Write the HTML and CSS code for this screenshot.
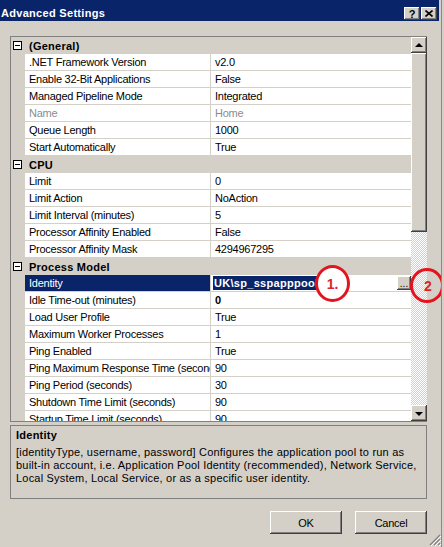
FILE: index.html
```html
<!DOCTYPE html>
<html lang="en">
<head>
    <meta charset="UTF-8">
    <meta name="viewport" content="width=device-width, initial-scale=1.0">
    <title>Advanced Settings</title>
    <link rel="stylesheet" href="styles.css">
</head>
<body>
    <div class="window">
        <div class="titlebar">
            <span class="title">Advanced Settings</span>
            <div class="caption-buttons">
                <button class="caption-btn" type="button">?</button>
                <button class="caption-btn" type="button">
                    <svg width="8" height="7" viewBox="0 0 8 7"><path d="M0.5 0.5 L7.5 6.5 M7.5 0.5 L0.5 6.5" stroke="#000" stroke-width="1.6" fill="none"/></svg>
                </button>
            </div>
        </div>

        <div class="content">
            <div class="grid">
                <div class="rows">
                    <div class="row category"><span class="toggle"></span><span class="cat-label">(General)</span></div>
                    <div class="row"><div class="name">.NET Framework Version</div><div class="value">v2.0</div></div>
                    <div class="row"><div class="name">Enable 32-Bit Applications</div><div class="value">False</div></div>
                    <div class="row"><div class="name">Managed Pipeline Mode</div><div class="value">Integrated</div></div>
                    <div class="row disabled"><div class="name">Name</div><div class="value">Home</div></div>
                    <div class="row"><div class="name">Queue Length</div><div class="value">1000</div></div>
                    <div class="row"><div class="name">Start Automatically</div><div class="value">True</div></div>
                    <div class="row category"><span class="toggle"></span><span class="cat-label">CPU</span></div>
                    <div class="row"><div class="name">Limit</div><div class="value">0</div></div>
                    <div class="row"><div class="name">Limit Action</div><div class="value">NoAction</div></div>
                    <div class="row"><div class="name">Limit Interval (minutes)</div><div class="value">5</div></div>
                    <div class="row"><div class="name">Processor Affinity Enabled</div><div class="value">False</div></div>
                    <div class="row"><div class="name">Processor Affinity Mask</div><div class="value">4294967295</div></div>
                    <div class="row category"><span class="toggle"></span><span class="cat-label">Process Model</span></div>
                    <div class="row selected">
                        <div class="name">Identity</div>
                        <div class="value"><span class="value-text"><span class="highlight">UK\sp_sspapppool</span></span><span class="ellipsis-btn">...</span></div>
                    </div>
                    <div class="row"><div class="name">Idle Time-out (minutes)</div><div class="value bold">0</div></div>
                    <div class="row"><div class="name">Load User Profile</div><div class="value">True</div></div>
                    <div class="row"><div class="name">Maximum Worker Processes</div><div class="value">1</div></div>
                    <div class="row"><div class="name">Ping Enabled</div><div class="value">True</div></div>
                    <div class="row"><div class="name">Ping Maximum Response Time (seconds)</div><div class="value">90</div></div>
                    <div class="row"><div class="name">Ping Period (seconds)</div><div class="value">30</div></div>
                    <div class="row"><div class="name">Shutdown Time Limit (seconds)</div><div class="value">90</div></div>
                    <div class="row"><div class="name">Startup Time Limit (seconds)</div><div class="value">90</div></div>
                </div>
                <div class="scrollbar">
                    <div class="sb-btn"><span class="arrow up"></span></div>
                    <div class="sb-thumb"></div>
                    <div class="sb-track"></div>
                    <div class="sb-btn"><span class="arrow down"></span></div>
                </div>
            </div>

            <div class="description">
                <div class="desc-title">Identity</div>
                <div class="desc-text">[identityType, username, password] Configures the application pool to run as<br>built-in account, i.e. Application Pool Identity (recommended), Network Service,<br>Local System, Local Service, or as a specific user identity.</div>
            </div>

            <div class="buttons">
                <button class="btn" type="button">OK</button>
                <button class="btn" type="button">Cancel</button>
            </div>
        </div>

        <svg class="grip" width="12" height="12" viewBox="0 0 12 12">
            <path d="M11 1 L1 11 M11 5 L5 11 M11 9 L9 11" stroke="#808080" stroke-width="1.2"/>
            <path d="M12 2 L2 12 M12 6 L6 12 M12 10 L10 12" stroke="#fff" stroke-width="1"/>
        </svg>

        <!-- red annotation marks drawn over the screenshot -->
        <div class="mark mark-one">1.</div>
        <div class="mark mark-two">2</div>
    </div>
</body>
</html>
```

FILE: styles.css
```css
body {
    margin: 0;
    background-color: #d4d0c8;
    font-family: "Liberation Sans", Arial, sans-serif;
    font-size: 11px;
    letter-spacing: -0.25px;
    color: #000;
}

.window {
    position: relative;
    width: 441px;
    height: 547px;
    border-right: 1px solid #8a8a8a;
    overflow: hidden;
}

/* title bar */
.titlebar {
    display: flex;
    justify-content: space-between;
    height: 21px;
    margin-right: 2px;
    background-color: #0a246a;
    color: #fff;
}

.title {
    padding-left: 1px;
    height: 21px;
    overflow: hidden;
    font-weight: bold;
    letter-spacing: 0.3px;
    line-height: 26px;
}

.caption-buttons {
    display: flex;
    gap: 1px;
    padding-top: 7px;
    padding-right: 2px;
}

.caption-btn {
    width: 16px;
    height: 13px;
    padding: 0;
    border: none;
    background-color: #d4d0c8;
    box-shadow: inset -1px -1px #404040, inset 1px 1px #fff, inset -2px -2px #808080;
    font-family: "Liberation Sans", Arial, sans-serif;
    font-size: 11px;
    font-weight: bold;
    line-height: 12px;
    display: flex;
    justify-content: center;
    align-items: center;
}

/* main area */
.content {
    padding: 15px 14px 0 10px;
}

.grid {
    display: flex;
    height: 384px;
    border-top: 1px solid #808080;
    border-left: 1px solid #808080;
    border-bottom: 1px solid #808080;
    background-color: #fff;
}

.rows {
    flex: 1;
    overflow: hidden;
}

.row {
    display: flex;
    height: 17px;
    box-sizing: border-box;
    padding-left: 14px;
    border-bottom: 1px solid #d4d0c8;
    background-color: #d4d0c8;
    line-height: 16px;
}

.name {
    width: 181px;
    padding-left: 4px;
    border-right: 1px solid #d4d0c8;
    background-color: #fff;
    white-space: nowrap;
    overflow: hidden;
}

.value {
    flex: 1;
    display: flex;
    padding-left: 4px;
    background-color: #fff;
    white-space: nowrap;
    overflow: hidden;
}

.value.bold {
    font-weight: bold;
}

.disabled .name,
.disabled .value {
    color: #8c8c8c;
}

.category {
    padding-left: 2px;
    align-items: center;
    border-bottom: none;
}

.toggle {
    position: relative;
    width: 9px;
    height: 9px;
    box-sizing: border-box;
    border: 1px solid #000;
    background-color: #fff;
    margin-right: 7px;
    margin-top: -1px;
}

.toggle::after {
    content: "";
    position: absolute;
    left: 1px;
    top: 3px;
    width: 5px;
    height: 1px;
    background-color: #000;
}

.cat-label {
    font-weight: bold;
    letter-spacing: 0.25px;
}

.selected .name {
    background-color: #0a246a;
    color: #fff;
}

.selected .value {
    padding-left: 2px;
}

.value-text {
    flex: 1;
    overflow: hidden;
}

.highlight {
    background-color: #0a246a;
    color: #fff;
    font-weight: bold;
    letter-spacing: 0.3px;
    padding: 1px 1px;
}

.ellipsis-btn {
    width: 14px;
    height: 14px;
    margin-top: 1px;
    background-color: #d4d0c8;
    box-shadow: inset -1px -1px #404040, inset 1px 1px #fff, inset -2px -2px #808080;
    font-size: 10px;
    line-height: 16px;
    text-align: center;
    letter-spacing: 0;
}

/* scrollbar */
.scrollbar {
    display: flex;
    flex-direction: column;
    width: 16px;
}

.sb-btn,
.sb-thumb {
    background-color: #d4d0c8;
    box-shadow: inset -1px -1px #404040, inset 1px 1px #fff, inset -2px -2px #808080;
}

.sb-btn {
    height: 16px;
    display: flex;
    justify-content: center;
    align-items: center;
}

.sb-thumb {
    height: 179px;
}

.sb-track {
    flex: 1;
    background: repeating-conic-gradient(#ffffff 0 25%, #d4d0c8 0 50%) 0 0 / 2px 2px;
}

.arrow {
    width: 0;
    height: 0;
    border-left: 4px solid transparent;
    border-right: 4px solid transparent;
}

.arrow.up {
    border-bottom: 4px solid #000;
    margin-top: -1px;
}

.arrow.down {
    border-top: 4px solid #000;
    margin-top: 1px;
}

/* description panel */
.description {
    margin-top: 3px;
    height: 69px;
    padding: 3px 5px 0 5px;
    border: 1px solid #808080;
}

.desc-title {
    font-weight: bold;
    letter-spacing: 0.25px;
    line-height: 13px;
    margin-bottom: 4px;
}

.desc-text {
    line-height: 13px;
    letter-spacing: 0.2px;
    white-space: nowrap;
}

/* dialog buttons */
.buttons {
    display: flex;
    justify-content: flex-end;
    gap: 13px;
    margin-top: 12px;
}

.btn {
    width: 72px;
    height: 23px;
    padding: 0;
    border: none;
    background-color: #d4d0c8;
    box-shadow: inset -1px -1px #404040, inset 1px 1px #fff, inset -2px -2px #808080;
    font-family: "Liberation Sans", Arial, sans-serif;
    font-size: 11px;
    letter-spacing: -0.25px;
    color: #000;
}

.grip {
    position: absolute;
    right: 0;
    bottom: 1px;
}

/* annotation circles */
.mark {
    position: absolute;
    box-sizing: border-box;
    border: 3px solid #e3141d;
    border-radius: 50%;
    color: #d8262c;
    font-size: 14px;
    font-weight: bold;
    letter-spacing: 0;
    display: flex;
    justify-content: center;
    align-items: center;
}

.mark-one {
    left: 315px;
    top: 265px;
    width: 35px;
    height: 37px;
    background-color: #fff;
}

.mark-two {
    left: 410px;
    top: 268px;
    width: 34px;
    height: 35px;
    padding-left: 2px;
}
```
